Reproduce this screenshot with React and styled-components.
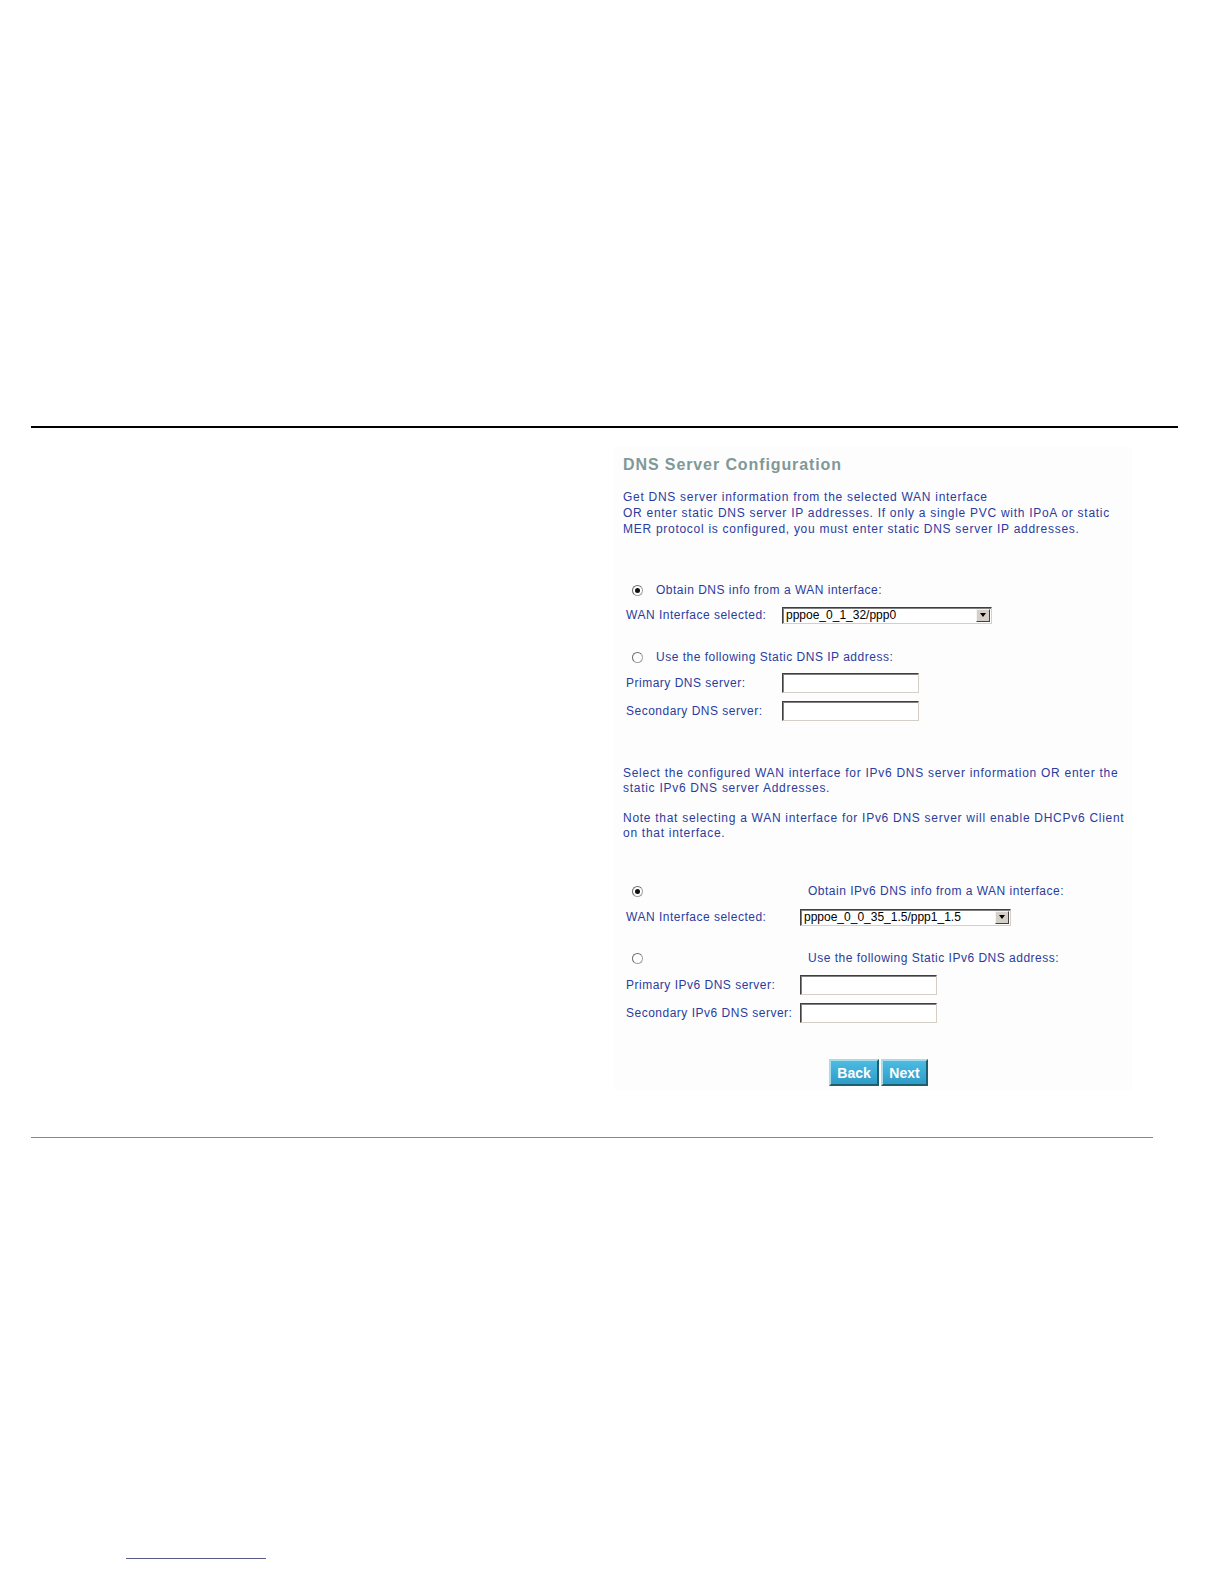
import React from "react";
import styled, { createGlobalStyle } from "styled-components";

const Global = createGlobalStyle`
  html, body { margin: 0; padding: 0; background: #ffffff; }
  body { font-family: "Liberation Sans", Arial, sans-serif; }
`;

const Page = styled.div`
  width: 1224px;
  height: 1584px;
  position: relative;
  overflow: hidden;
  padding-top: 426px;
  box-sizing: border-box;
`;

const Rule = styled.div`
  margin-left: 31px;
  margin-top: ${(p) => p.$mt || 0}px;
  width: ${(p) => p.$w}px;
  height: ${(p) => p.$h}px;
  background: ${(p) => p.$c};
`;

const Panel = styled.div`
  margin: 19px 0 0 614px;
  width: 518px;
  height: 643px;
  box-sizing: border-box;
  padding: 8px 0 0 9px;
  background: #fdfdfd;
`;

const Title = styled.div`
  font-family: "Liberation Sans", Arial, sans-serif;
  font-weight: bold;
  font-size: 16px;
  letter-spacing: 0.9px;
  color: #7f9898;
  line-height: 20px;
`;

const Para = styled.div`
  margin-top: ${(p) => p.$mt}px;
  font-size: 12px;
  letter-spacing: 0.72px;
  color: #2a3c9e;
  line-height: ${(p) => p.$lh || 16}px;
  white-space: pre-line;
`;

const Table = styled.div`
  display: grid;
  grid-template-columns: ${(p) => p.$col}px 1fr;
  margin-top: ${(p) => p.$mt}px;
  padding-left: 3px;
  font-size: 12px;
  letter-spacing: 0.5px;
  color: #2a3c9e;
`;

const Cell = styled.div`
  display: flex;
  align-items: center;
  height: ${(p) => p.$h || 20}px;
  white-space: nowrap;
`;

const RadioCell = styled(Cell)`
  grid-column: ${(p) => (p.$span ? "1 / span 2" : "auto")};
  padding-left: 6px;
`;

const Radio = styled.span`
  display: inline-block;
  width: 9px;
  height: 9px;
  border-radius: 50%;
  border: 1px solid #a0a0a0;
  border-top-color: #6a6a6a;
  border-left-color: #6a6a6a;
  background: #fff;
  position: relative;
  margin-right: ${(p) => p.$mr || 0}px;
  flex-shrink: 0;
  &::after {
    content: "";
    display: ${(p) => (p.$on ? "block" : "none")};
    position: absolute;
    left: 2px;
    top: 2px;
    width: 5px;
    height: 5px;
    border-radius: 50%;
    background: #111;
  }
`;

const Label2 = styled.span`
  padding-left: 8px;
`;

const Select = styled.div`
  width: ${(p) => p.$w}px;
  height: 17px;
  box-sizing: border-box;
  border: 1px solid #404040;
  border-right-color: #d4d0c8;
  border-bottom-color: #d4d0c8;
  box-shadow: inset 1px 1px 0 #808080;
  background: #fff;
  display: flex;
  align-items: center;
  justify-content: space-between;
  font-family: "Liberation Sans", Arial, sans-serif;
  font-size: 12px;
  letter-spacing: 0;
  color: #000;
  padding-left: 3px;
`;

const Arrow = styled.span`
  width: 14px;
  height: 13px;
  margin-right: 1px;
  box-sizing: border-box;
  background: #d4d0c8;
  border: 1px solid #f4f4f4;
  border-right-color: #404040;
  border-bottom-color: #404040;
  display: flex;
  align-items: center;
  justify-content: center;
  &::after {
    content: "";
    border-left: 3.5px solid transparent;
    border-right: 3.5px solid transparent;
    border-top: 4px solid #000;
  }
`;

const Input = styled.div`
  width: 137px;
  height: 20px;
  box-sizing: border-box;
  border: 1px solid #404040;
  border-right-color: #d4d0c8;
  border-bottom-color: #d4d0c8;
  box-shadow: inset 1px 1px 0 #808080;
  background: #fff;
`;

const Buttons = styled.div`
  display: flex;
  gap: 2px;
  margin: 32px 0 0 206px;
`;

const Button = styled.div`
  width: ${(p) => p.$w}px;
  height: 27px;
  box-sizing: border-box;
  border: 2px solid #1d5f70;
  border-top-color: #a9dceb;
  border-left-color: #a9dceb;
  background: linear-gradient(#4cbbe2, #2f9cc8);
  color: #fff;
  font-family: "Liberation Sans", Arial, sans-serif;
  font-weight: bold;
  font-size: 14px;
  display: flex;
  align-items: center;
  justify-content: center;
`;

const FootLink = styled.div`
  position: absolute;
  left: 126px;
  top: 1558px;
  width: 140px;
  height: 1px;
  background: #5a5a8a;
`;

export default function App() {
  return (
    <>
      <Global />
      <Page>
        <Rule $w={1147} $h={2} $c="#000" />
        <Panel>
          <Title>DNS Server Configuration</Title>
          <Para $mt={14}>
            {"Get DNS server information from the selected WAN interface\nOR enter static DNS server IP addresses. If only a single PVC with IPoA or static\nMER protocol is configured, you must enter static DNS server IP addresses."}
          </Para>
          <Table $col={156} $mt={40}>
            <RadioCell $span $h={26}>
              <Radio $on $mr={13} />
              Obtain DNS info from a WAN interface:
            </RadioCell>
            <Cell $h={24}>WAN Interface selected:</Cell>
            <Cell $h={24}>
              <Select $w={210}>
                pppoe_0_1_32/ppp0
                <Arrow />
              </Select>
            </Cell>
            <Cell $h={18} />
            <Cell $h={18} />
            <RadioCell $span $h={24}>
              <Radio $mr={13} />
              Use the following Static DNS IP address:
            </RadioCell>
            <Cell $h={28}>Primary DNS server:</Cell>
            <Cell $h={28}>
              <Input />
            </Cell>
            <Cell $h={28}>Secondary DNS server:</Cell>
            <Cell $h={28}>
              <Input />
            </Cell>
          </Table>
          <Para $mt={41} $lh={15}>
            {"Select the configured WAN interface for IPv6 DNS server information OR enter the\nstatic IPv6 DNS server Addresses."}
          </Para>
          <Para $mt={15} $lh={15}>
            {"Note that selecting a WAN interface for IPv6 DNS server will enable DHCPv6 Client\non that interface."}
          </Para>
          <Table $col={174} $mt={36}>
            <RadioCell $h={28}>
              <Radio $on />
            </RadioCell>
            <Cell $h={28}>
              <Label2>Obtain IPv6 DNS info from a WAN interface:</Label2>
            </Cell>
            <Cell $h={24}>WAN Interface selected:</Cell>
            <Cell $h={24}>
              <Select $w={211}>
                pppoe_0_0_35_1.5/ppp1_1.5
                <Arrow />
              </Select>
            </Cell>
            <Cell $h={16} />
            <Cell $h={16} />
            <RadioCell $h={26}>
              <Radio />
            </RadioCell>
            <Cell $h={26}>
              <Label2>Use the following Static IPv6 DNS address:</Label2>
            </Cell>
            <Cell $h={28}>Primary IPv6 DNS server:</Cell>
            <Cell $h={28}>
              <Input />
            </Cell>
            <Cell $h={28}>Secondary IPv6 DNS server:</Cell>
            <Cell $h={28}>
              <Input />
            </Cell>
          </Table>
          <Buttons>
            <Button $w={50}>Back</Button>
            <Button $w={47}>Next</Button>
          </Buttons>
        </Panel>
        <Rule $w={1122} $h={1} $c="#888" $mt={47} />
        <FootLink />
      </Page>
    </>
  );
}
